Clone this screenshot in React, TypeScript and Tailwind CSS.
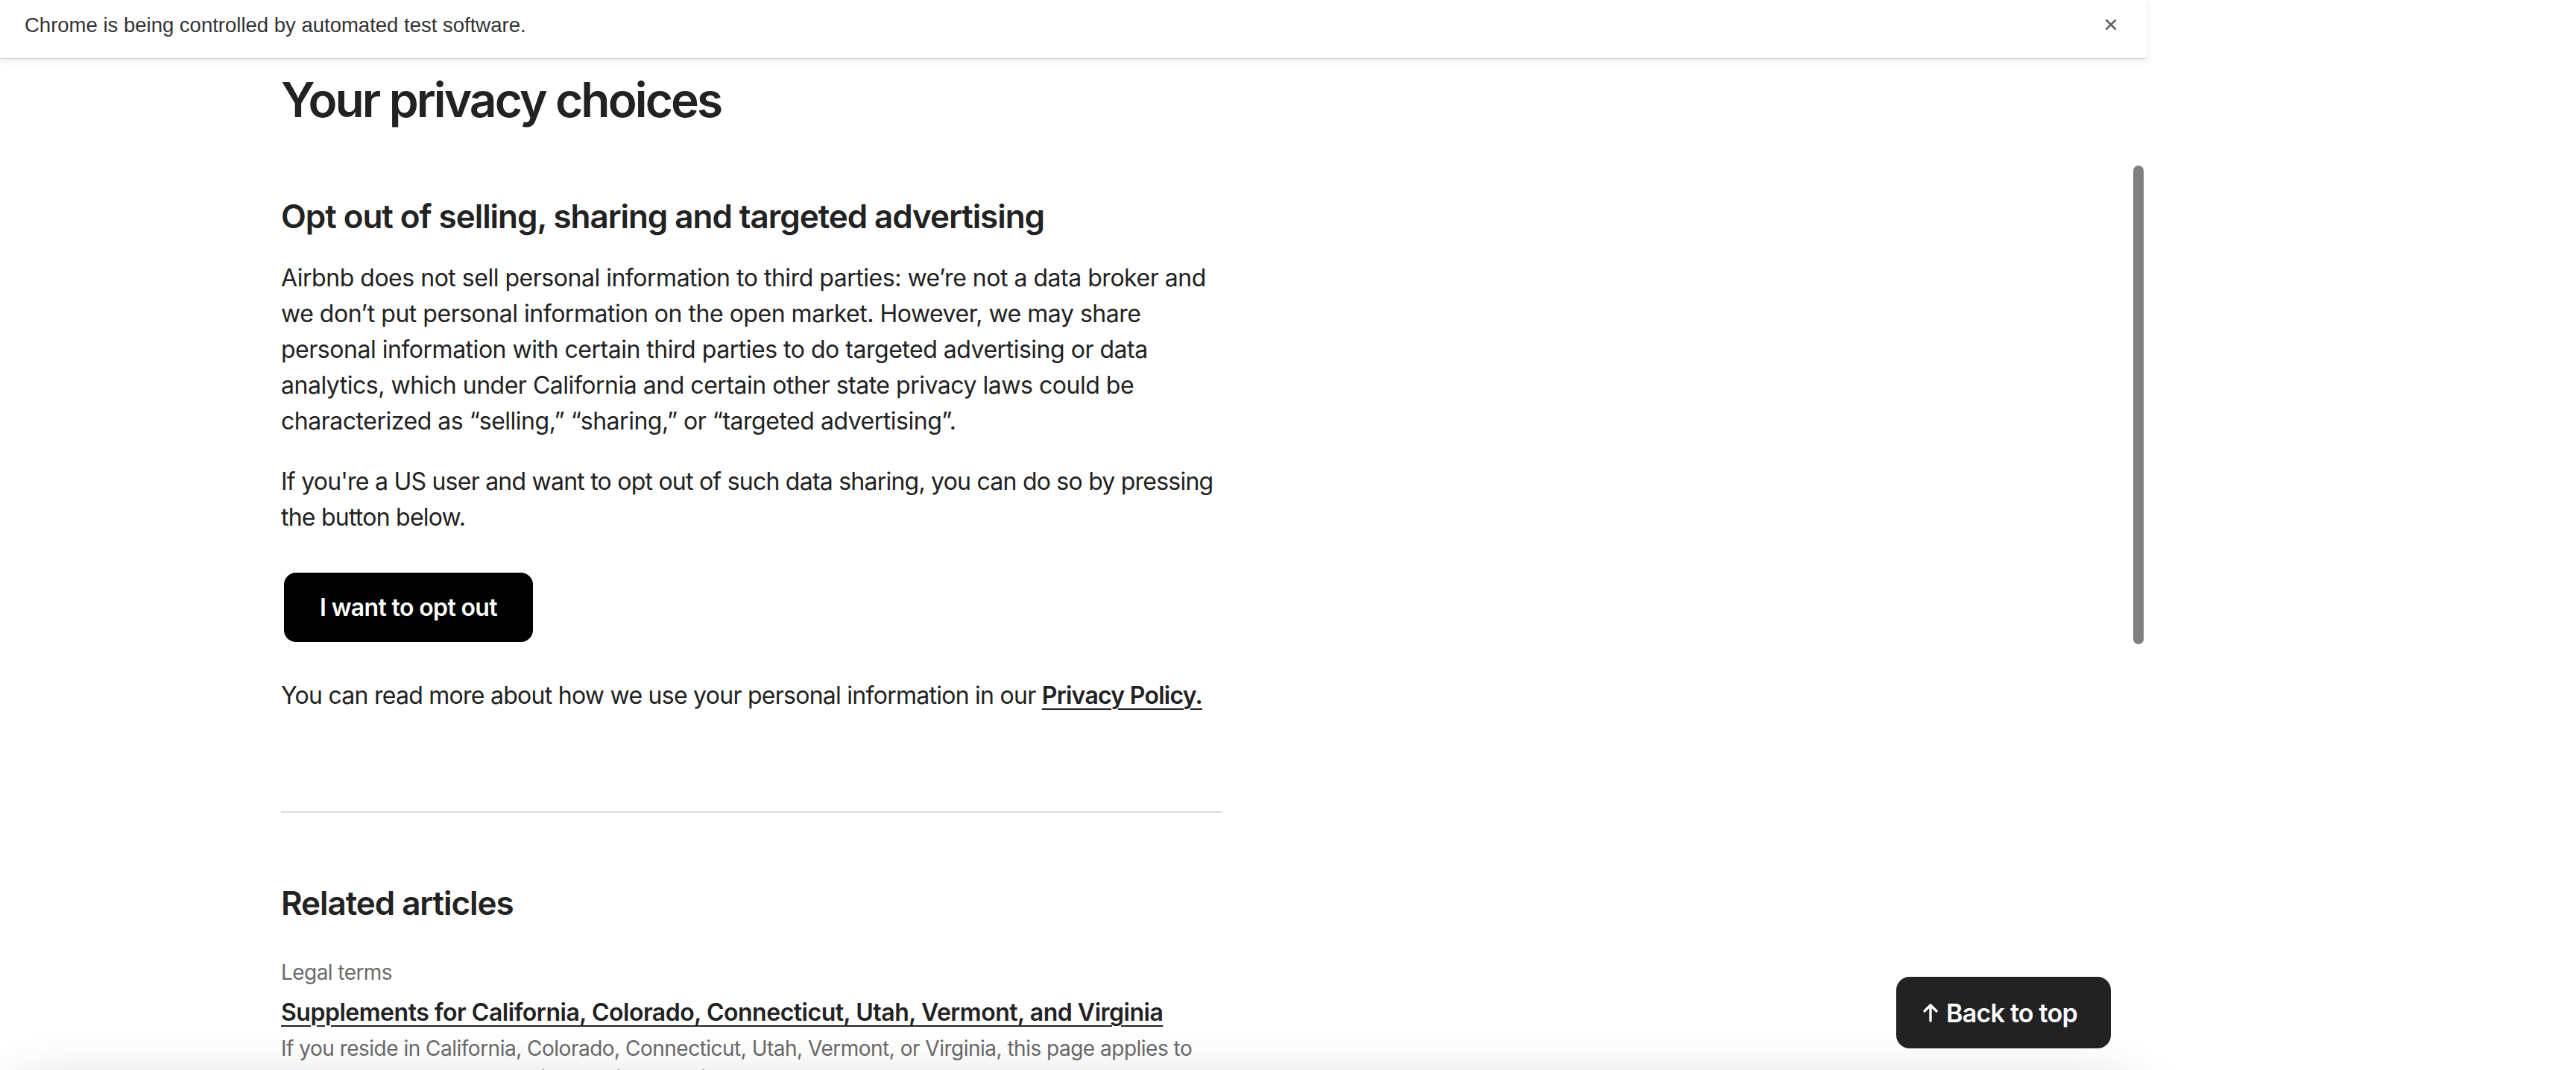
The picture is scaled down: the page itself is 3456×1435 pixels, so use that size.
import React from "react";

function CloseIcon() {
  return (
    <svg width="20" height="20" viewBox="0 0 20 20" fill="none">
      <path d="M3.5 3.5 L16.5 16.5 M16.5 3.5 L3.5 16.5" stroke="#5f6368" strokeWidth="2.6" strokeLinecap="butt" />
    </svg>
  );
}

function ArrowUp() {
  return (
    <svg width="22" height="26" viewBox="0 0 22 26" fill="none">
      <path d="M11 24 V3 M3 11 L11 3 L19 11" stroke="#ffffff" strokeWidth="3.4" strokeLinecap="round" strokeLinejoin="round" />
    </svg>
  );
}

export default function App() {
  return (
    <div className="relative w-[3456px] h-[1435px] overflow-hidden bg-white font-['Inter','Noto_Sans',sans-serif] text-[#222222]">
      <div className="relative w-[2880px] h-full">
        {/* Chrome automation infobar */}
        <div className="relative z-20 h-[78px] bg-white flex items-center justify-between pl-[33px] pr-[38px] shadow-[0_1px_0_#d6d6d6,0_3px_9px_rgba(0,0,0,0.10)]">
          <span className="font-['Liberation_Sans',Arial,sans-serif] text-[27.5px] text-[#333333] leading-none -mt-[10px]">
            Chrome is being controlled by automated test software.
          </span>
          <span className="-mt-[12px]">
            <CloseIcon />
          </span>
        </div>

        {/* Article */}
        <main className="pl-[377px]">
          <div className="w-[1263px]">
            <h1 className="mt-[16px] text-[64px] leading-[80px] font-semibold tracking-[-0.045em]">
              Your privacy choices
            </h1>

            <h2 className="mt-[90px] text-[44px] leading-[52px] font-semibold tracking-[-0.024em]">
              Opt out of selling, sharing and targeted advertising
            </h2>

            <p className="mt-[33px] text-[32px] leading-[48px] tracking-[-0.015em]">
              Airbnb does not sell personal information to third parties: we’re not a data broker and
              we don’t put personal information on the open market. However, we may share personal
              information with certain third parties to do targeted advertising or data analytics,
              which under California and certain other state privacy laws could be characterized as
              “selling,” “sharing,” or “targeted advertising”.
            </p>

            <p className="mt-[33px] text-[32px] leading-[48px] tracking-[-0.024em]">
              If you're a US user and want to opt out of such data sharing, you can do so by pressing
              the button below.
            </p>

            <div className="mt-[50px] pl-[4px]">
              <button className="h-[93px] w-[334px] rounded-[16px] bg-black text-white text-[32px] font-semibold tracking-[-0.02em] flex items-center justify-center">
                I want to opt out
              </button>
            </div>

            <p className="mt-[48px] text-[32px] leading-[48px] tracking-[-0.023em]">
              You can read more about how we use your personal information in our{" "}
              <a className="font-semibold underline decoration-[2px] underline-offset-[6px]">Privacy Policy.</a>
            </p>

            <div className="mt-[131px] h-[2px] bg-[#dddddd]" />

            <h2 className="mt-[95px] text-[44px] leading-[52px] font-semibold tracking-[-0.024em]">
              Related articles
            </h2>

            <div className="mt-[47px] text-[28px] leading-[40px] text-[#6a6a6a] tracking-[-0.02em]">
              Legal terms
            </div>
            <a className="block mt-[10px] text-[32px] leading-[48px] font-semibold underline decoration-[2px] underline-offset-[6px] tracking-[-0.015em]">
              Supplements for California, Colorado, Connecticut, Utah, Vermont, and Virginia
            </a>
            <p className="mt-[4px] text-[28px] leading-[40px] text-[#6a6a6a] tracking-[-0.018em]">
              If you reside in California, Colorado, Connecticut, Utah, Vermont, or Virginia, this page applies to
              you and supplements the Airbnb Privacy Policy.
            </p>
          </div>
        </main>

        {/* bottom shadow from element below the fold */}
        <div className="absolute left-[0px] top-[1450px] w-[2880px] h-[200px] rounded-[60px] bg-white shadow-[0_0_70px_rgba(0,0,0,0.16)]" />

        {/* overlay scrollbar thumb */}
        <div className="absolute left-[2862px] top-[222px] w-[14px] h-[642px] rounded-full bg-[#808080]" />

        {/* Back to top */}
        <button className="absolute right-[48px] bottom-[29px] h-[96px] w-[288px] rounded-[18px] bg-[#222222] text-white flex items-center pl-[35px] gap-[10px] text-[34px] font-semibold tracking-[-0.022em] z-10">
          <ArrowUp />
          <span>Back to top</span>
        </button>
      </div>
    </div>
  );
}
